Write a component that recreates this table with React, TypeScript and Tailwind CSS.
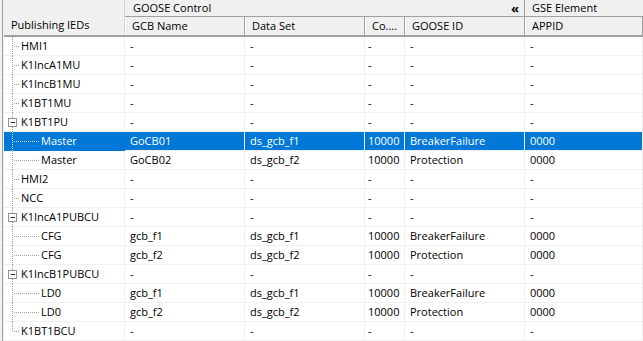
import React from "react";

type Row = {
  name: string;
  kind: "leaf" | "open" | "child";
  cells: string[];
  selected?: boolean;
  last?: boolean;
};

const empty = ["-", "-", "-", "-", "-"];

const rows: Row[] = [
  { name: "HMI1", kind: "leaf", cells: empty },
  { name: "K1IncA1MU", kind: "leaf", cells: empty },
  { name: "K1IncB1MU", kind: "leaf", cells: empty },
  { name: "K1BT1MU", kind: "leaf", cells: empty },
  { name: "K1BT1PU", kind: "open", cells: empty },
  { name: "Master", kind: "child", cells: ["GoCB01", "ds_gcb_f1", "10000", "BreakerFailure", "0000"], selected: true },
  { name: "Master", kind: "child", cells: ["GoCB02", "ds_gcb_f2", "10000", "Protection", "0000"] },
  { name: "HMI2", kind: "leaf", cells: empty },
  { name: "NCC", kind: "leaf", cells: empty },
  { name: "K1IncA1PUBCU", kind: "open", cells: empty },
  { name: "CFG", kind: "child", cells: ["gcb_f1", "ds_gcb_f1", "10000", "BreakerFailure", "0000"] },
  { name: "CFG", kind: "child", cells: ["gcb_f2", "ds_gcb_f2", "10000", "Protection", "0000"] },
  { name: "K1IncB1PUBCU", kind: "open", cells: empty },
  { name: "LD0", kind: "child", cells: ["gcb_f1", "ds_gcb_f1", "10000", "BreakerFailure", "0000"] },
  { name: "LD0", kind: "child", cells: ["gcb_f2", "ds_gcb_f2", "10000", "Protection", "0000"] },
  { name: "K1BT1BCU", kind: "leaf", cells: empty, last: true },
];

const cols = "grid grid-cols-[121px_120px_120px_40px_120px_1fr]";

// dotted tree connectors drawn in the first column
const TreeLines = ({ row }: { row: Row }) => {
  const c = row.selected ? "#cfe4f7" : "#a0a0a0";
  const dash = "1 1";
  return (
    <svg className="absolute left-0 top-0" width="40" height="19" viewBox="0 0 40 19">
      {row.kind === "open" ? (
        <>
          <line x1="8.5" y1="0" x2="8.5" y2="5" stroke={c} strokeDasharray={dash} />
          <line x1="8.5" y1="14" x2="8.5" y2="19" stroke={c} strokeDasharray={dash} />
          <rect x="4.5" y="5.5" width="8" height="8" fill="#fff" stroke="#919191" />
          <line x1="6.5" y1="9.5" x2="11" y2="9.5" stroke="#333" />
        </>
      ) : (
        <>
          <line x1="8.5" y1="0" x2="8.5" y2={row.last ? 9.5 : 19} stroke={c} strokeDasharray={dash} />
          <line
            x1="10"
            y1="9.5"
            x2={row.kind === "child" ? 35 : 15}
            y2="9.5"
            stroke={c}
            strokeDasharray={dash}
          />
        </>
      )}
    </svg>
  );
};

export default function App() {
  return (
    <div
      className="flex h-[341px] w-[643px] overflow-hidden bg-white text-[11px] text-black"
      style={{ fontFamily: '"Open Sans", "Noto Sans", sans-serif' }}
    >
      {/* window frame on the left */}
      <div className="w-[2px] shrink-0 bg-[#f0f0f0]" />
      <div className="w-[1px] shrink-0 bg-[#a0a0a0]" />
      <div className="w-[1px] shrink-0 bg-[#f0f0f0]" />

      <div className="flex min-w-0 flex-1 flex-col">
        {/* two-level header */}
        <div className={`${cols} grid-rows-[17px_18px] border-b-2 border-[#a0a0a0] bg-[#f0f0f0]`}>
          <div className="row-span-2 flex items-end border-r border-[#d5d5d5] pb-[2px] pl-[7px]">
            Publishing IEDs
          </div>
          <div className="col-span-4 flex items-center justify-between border-r border-b border-[#a0a0a0] pl-[8px] pr-[5px]">
            <span>GOOSE Control</span>
            <span className="text-[13px] font-bold leading-none">«</span>
          </div>
          <div className="flex items-center border-b border-[#a0a0a0] pl-[7px]">GSE Element</div>
          {["GCB Name", "Data Set", "Co....", "GOOSE ID", "APPID"].map((h) => (
            <div
              key={h}
              className="flex items-center overflow-hidden whitespace-nowrap border-r border-l border-r-[#a0a0a0] border-l-white pl-[6px]"
            >
              {h}
            </div>
          ))}
        </div>

        {/* tree rows */}
        {rows.map((row, i) => (
          <div
            key={i}
            className={`${cols} h-[19px] ${row.selected ? "bg-[#0078d7] text-white" : ""}`}
          >
            <div
              className={`relative flex items-center border-b border-r ${
                row.selected ? "border-[#0078d7]" : "border-[#f0f0f0]"
              } ${row.kind === "child" ? "pl-[37px]" : "pl-[17px]"}`}
            >
              <TreeLines row={row} />
              {row.name}
            </div>
            {row.cells.map((v, j) => (
              <div
                key={j}
                className={`flex items-center overflow-hidden whitespace-nowrap border-b border-r border-[#f0f0f0] ${
                  j === 2 ? "pl-[3px]" : "pl-[5px]"
                }`}
              >
                {v}
              </div>
            ))}
          </div>
        ))}
      </div>
    </div>
  );
}
